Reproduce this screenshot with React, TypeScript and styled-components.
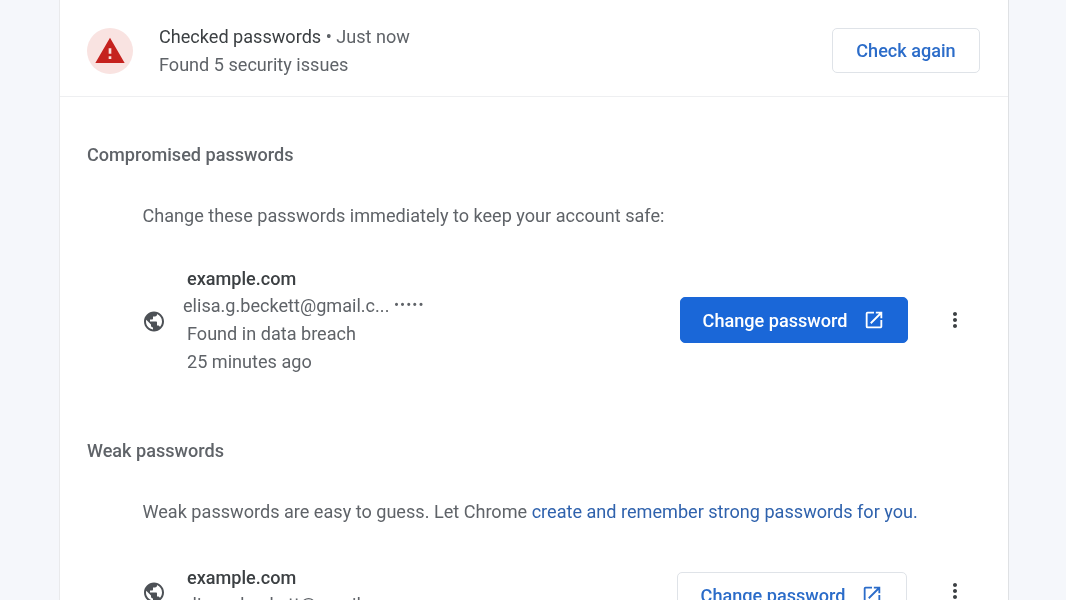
import { MdMoreVert, MdOpenInNew, MdPublic, MdWarning } from "react-icons/md";
import styled, { createGlobalStyle } from "styled-components";

const GlobalStyle = createGlobalStyle`
  html, body {
    margin: 0;
    height: 600px;
    overflow: hidden;
    background: #f5f7fb;
    font-family: Roboto, "Liberation Sans", sans-serif;
  }
`;

const Page = styled.div`
  display: flex;
  height: 600px;
  overflow: hidden;
  padding-left: 59px;
  filter: blur(0.4px);
`;

const Card = styled.main`
  width: 948px;
  height: 720px;
  flex: none;
  background: #ffffff;
  border-left: 1px solid #e9eaec;
  border-right: 1px solid #dfe1e4;
`;

const Header = styled.header`
  display: flex;
  align-items: center;
  height: 97px;
  box-sizing: border-box;
  padding: 5px 28px 0 27px;
  border-bottom: 1px solid #eeeff1;
`;

const StatusBadge = styled.div`
  display: flex;
  align-items: center;
  justify-content: center;
  width: 46px;
  height: 46px;
  border-radius: 50%;
  background: #f9e3e1;
  color: #c5221f;
  font-size: 32px;
`;

const HeaderText = styled.div`
  flex: 1;
  margin-left: 26px;
  margin-top: 1px;
`;

const HeaderTitle = styled.div`
  font-size: 18.1px;
  line-height: 28px;
  color: #3c4043;
`;

const Muted = styled.span`
  color: #5f6368;
`;

const HeaderSub = styled.div`
  font-size: 18.1px;
  line-height: 28px;
  color: #5f6368;
`;

const Button = styled.button<{ $primary?: boolean }>`
  display: flex;
  align-items: center;
  justify-content: center;
  gap: 16px;
  box-sizing: border-box;
  padding: 0;
  border-radius: 5px;
  border: 1px solid ${(p) => (p.$primary ? "#1a67d8" : "#dfe3e8")};
  background: ${(p) => (p.$primary ? "#1a67d8" : "#ffffff")};
  color: ${(p) => (p.$primary ? "#ffffff" : "#2b6cc9")};
  font-family: inherit;
  font-size: 18.1px;
  font-weight: 500;
`;

const CheckButton = styled(Button)`
  width: 148px;
  height: 45px;
`;

const Section = styled.section`
  padding: 0 28px 0 27px;
`;

const SectionTitle = styled.h2<{ $top: number }>`
  margin: ${(p) => p.$top}px 0 0;
  font-size: 18.1px;
  line-height: 28px;
  font-weight: 500;
  color: #5f6368;
`;

const SectionNote = styled.p`
  margin: 33px 0 0 55.5px;
  font-size: 18.1px;
  line-height: 28px;
  color: #5f6368;
`;

const NoteLink = styled.a`
  color: #2f62ad;
`;

const Row = styled.div<{ $top: number }>`
  display: flex;
  align-items: center;
  margin: ${(p) => p.$top}px 0 0 56px;
`;

const Globe = styled.div`
  display: flex;
  width: 24px;
  margin-right: 21px;
  margin-left: -1px;
  color: #4d5156;
  font-size: 25px;
`;

const Details = styled.div`
  flex: 1;
`;

const Site = styled.div`
  font-size: 18.1px;
  line-height: 25px;
  font-weight: 500;
  color: #3c4043;
`;

const Email = styled.div`
  margin-left: -4px;
  font-size: 18.1px;
  line-height: 28px;
  color: #5f6368;
`;

const Dots = styled.span`
  font-size: 15px;
  letter-spacing: 1.1px;
  vertical-align: 2px;
`;

const Meta = styled.div`
  font-size: 18.1px;
  line-height: 28px;
  color: #5f6368;
`;

const ChangeButton = styled(Button)`
  width: ${(p) => (p.$primary ? 228 : 230)}px;
  height: 46px;
  margin-right: ${(p) => (p.$primary ? 35 : 36)}px;
  margin-top: ${(p) => (p.$primary ? -2 : 6)}px;
  svg {
    font-size: 22px;
  }
`;

const MoreButton = styled.div`
  display: flex;
  width: 24px;
  margin-right: 13px;
  margin-top: -2px;
  color: #3c4043;
  font-size: 26px;
`;

const PasswordRow = ({
  top,
  primary,
  lines,
}: {
  top: number;
  primary?: boolean;
  lines: string[];
}) => (
  <Row $top={top}>
    <Globe>
      <MdPublic />
    </Globe>
    <Details>
      <Site>example.com</Site>
      <Email>
        elisa.g.beckett@gmail.c... <Dots>•••••</Dots>
      </Email>
      {lines.map((line) => (
        <Meta key={line}>{line}</Meta>
      ))}
    </Details>
    <ChangeButton $primary={primary}>
      Change password
      <MdOpenInNew />
    </ChangeButton>
    <MoreButton>
      <MdMoreVert />
    </MoreButton>
  </Row>
);

export default function App() {
  return (
    <>
      <GlobalStyle />
      <Page>
        <Card>
          <Header>
            <StatusBadge>
              <MdWarning />
            </StatusBadge>
            <HeaderText>
              <HeaderTitle>
                Checked passwords <Muted>• Just now</Muted>
              </HeaderTitle>
              <HeaderSub>Found 5 security issues</HeaderSub>
            </HeaderText>
            <CheckButton>Check again</CheckButton>
          </Header>
          <Section>
            <SectionTitle $top={44}>Compromised passwords</SectionTitle>
            <SectionNote>
              Change these passwords immediately to keep your account safe:
            </SectionNote>
            <PasswordRow
              top={36}
              primary
              lines={["Found in data breach", "25 minutes ago"]}
            />
            <SectionTitle $top={61}>Weak passwords</SectionTitle>
            <SectionNote>
              Weak passwords are easy to guess. Let Chrome{" "}
              <NoteLink>create and remember strong passwords for you.</NoteLink>
            </SectionNote>
            <PasswordRow top={39} lines={[]} />
          </Section>
        </Card>
      </Page>
    </>
  );
}
